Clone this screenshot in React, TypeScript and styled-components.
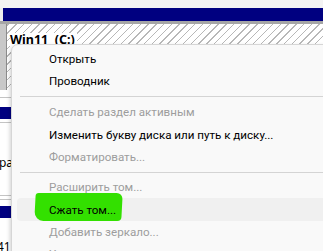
import React from 'react'
import styled, { createGlobalStyle } from 'styled-components'

const GlobalStyle = createGlobalStyle`
  html, body {
    margin: 0;
    padding: 0;
    background: #ffffff;
  }
  body {
    font-family: Roboto, 'Noto Sans', sans-serif;
    overflow: hidden;
  }
`

const Screen = styled.div`
  position: relative;
  width: 323px;
  height: 251px;
  overflow: hidden;
  display: flex;
  flex-direction: column;
  background: #ffffff;
`

const TopStrip = styled.div`
  flex-shrink: 0;
  height: 8px;
  background: #f3f3f3;
`

const TitleRow = styled.div`
  flex-shrink: 0;
  display: flex;
  height: 13px;
  background: #ececec;
`

const NavyBar = styled.div<{ $inset?: number }>`
  flex: 1;
  margin-left: ${({ $inset }) => $inset ?? 0}px;
  background: #000080;
`

const GrayBand = styled.div`
  flex-shrink: 0;
  height: 3px;
  background: #a6a6a6;
`

const DiskRow = styled.div`
  flex-shrink: 0;
  display: flex;
  height: 66px;
`

const DiskEdge = styled.div`
  width: 6px;
  background: #c8c8c8;
  border-right: 1px solid #8c8c8c;
`

const Hatch = styled.div`
  flex: 1;
  padding: 5px 0 0 3px;
  background-color: #ffffff;
  background-image: repeating-linear-gradient(
    -45deg,
    transparent 0px,
    transparent 4.5px,
    #b8b8b8 4.5px,
    #b8b8b8 5.5px
  );
`

const VolumeLabel = styled.span`
  display: inline-block;
  font-family: 'Noto Sans', sans-serif;
  font-size: 12.5px;
  font-weight: 700;
  color: #000000;
  background: #ffffff;
  line-height: 14px;
  padding-right: 2px;
`

const Rule = styled.div<{ $gap: number }>`
  flex-shrink: 0;
  margin-top: ${({ $gap }) => $gap}px;
  height: 1px;
  background: #c4c4c4;
`

const Band = styled.div<{ $gap: number }>`
  flex-shrink: 0;
  margin-top: ${({ $gap }) => $gap}px;
  height: 12px;
  background: #000080;
`

const SideText = styled.div<{ $gap: number; $shift: number }>`
  flex-shrink: 0;
  margin-top: ${({ $gap }) => $gap}px;
  margin-left: ${({ $shift }) => $shift}px;
  font-family: 'Noto Sans', sans-serif;
  font-size: 12px;
  line-height: 12px;
  color: #000000;
  white-space: nowrap;
`

const Menu = styled.div`
  position: absolute;
  left: 11px;
  top: 44px;
  width: 330px;
  height: 240px;
  box-sizing: border-box;
  padding: 2.6px 0 0 5px;
  background: #f9f9f9;
  border: 1px solid #d6d6d6;
  border-radius: 7px;
  box-shadow: -1px 2px 4px rgba(0, 0, 0, 0.18);
  display: flex;
  flex-direction: column;
`

const Item = styled.div<{ $disabled?: boolean; $active?: boolean }>`
  position: relative;
  flex-shrink: 0;
  height: 22.3px;
  display: flex;
  align-items: center;
  padding-left: 32px;
  border-radius: 4px;
  font-size: 11.6px;
  white-space: nowrap;
  color: ${({ $disabled }) => ($disabled ? '#9d9d9d' : '#000000')};
  background: ${({ $active }) => ($active ? '#f0f0f0' : 'transparent')};
`

const ItemText = styled.span`
  position: relative;
`

const Marker = styled.span`
  position: absolute;
  left: 18px;
  top: -5.5px;
  width: 87px;
  height: 27.8px;
  background: #33e000;
  border-radius: 3px 6px 4px 9px;
  transform: skewX(-3deg);
`

const Separator = styled.div<{ $size: number }>`
  flex-shrink: 0;
  height: ${({ $size }) => $size}px;
  display: flex;
  align-items: center;
  margin-left: 3px;

  &::after {
    content: '';
    flex: 1;
    height: 1px;
    background: #d4d4d4;
  }
`

type Entry =
  | { kind: 'item'; label: string; disabled?: boolean; active?: boolean }
  | { kind: 'sep'; size: number }

const entries: Entry[] = [
  { kind: 'item', label: 'Открыть' },
  { kind: 'item', label: 'Проводник' },
  { kind: 'sep', size: 9 },
  { kind: 'item', label: 'Сделать раздел активным', disabled: true },
  { kind: 'item', label: 'Изменить букву диска или путь к диску...' },
  { kind: 'item', label: 'Форматировать...', disabled: true },
  { kind: 'sep', size: 8 },
  { kind: 'item', label: 'Расширить том...', disabled: true },
  { kind: 'item', label: 'Сжать том...', active: true },
  { kind: 'item', label: 'Добавить зеркало...', disabled: true },
  { kind: 'item', label: 'Удалить том...', disabled: true },
]

export default function App() {
  return (
    <>
      <GlobalStyle />
      <Screen>
        <TopStrip />
        <TitleRow>
          <NavyBar $inset={3} />
        </TitleRow>
        <GrayBand />
        <DiskRow>
          <DiskEdge />
          <Hatch>
            <VolumeLabel>Win11&nbsp;&nbsp;(C:)</VolumeLabel>
          </Hatch>
        </DiskRow>
        <Rule $gap={7} />
        <Band $gap={9} />
        <Rule $gap={3} />
        <SideText $gap={34} $shift={-1}>раздел</SideText>
        <Rule $gap={26} />
        <Rule $gap={3} />
        <Band $gap={6} />
        <SideText $gap={23} $shift={-3}>41</SideText>

        <Menu>
          {entries.map((e, i) =>
            e.kind === 'sep' ? (
              <Separator key={i} $size={e.size} />
            ) : (
              <Item key={i} $disabled={e.disabled} $active={e.active}>
                {e.active && <Marker />}
                <ItemText>{e.label}</ItemText>
              </Item>
            )
          )}
        </Menu>
      </Screen>
    </>
  )
}
